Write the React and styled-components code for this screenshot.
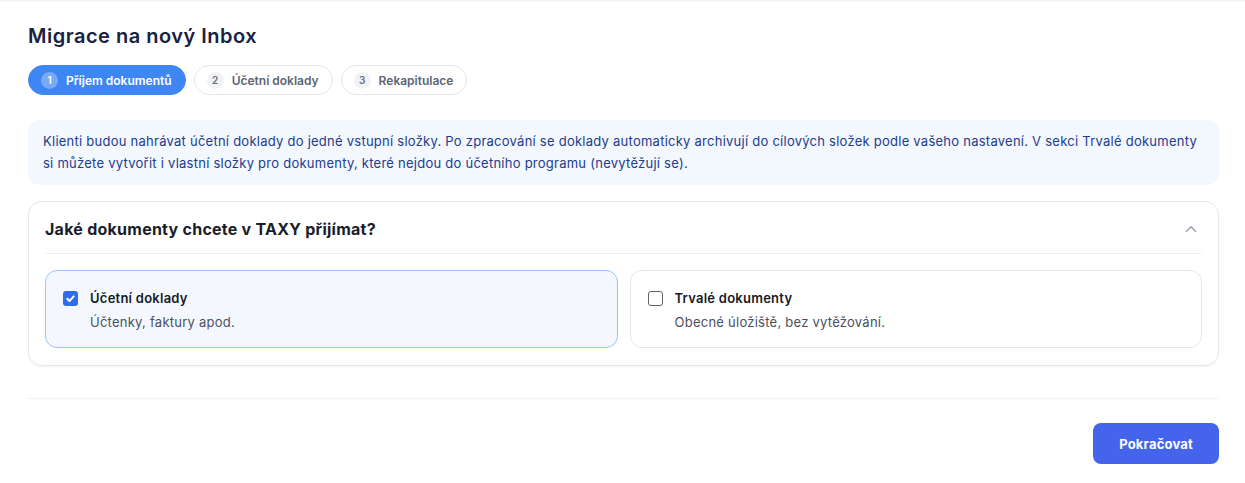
import React, { useState } from "react"
import styled, { createGlobalStyle } from "styled-components"

const GlobalStyle = createGlobalStyle`
  html, body {
    margin: 0;
    padding: 0;
    background: #ffffff;
    font-family: Inter, "Noto Sans", sans-serif;
    -webkit-font-smoothing: antialiased;
  }
  * { box-sizing: border-box; }
`

const Page = styled.div`
  border-top: 2px solid #f6f6f7;
  padding: 20px 26px 0 28px;
`

const Title = styled.h1`
  margin: 0;
  font-size: 20px;
  line-height: 28px;
  font-weight: 600;
  color: #18223f;
  letter-spacing: 0.5px;
`

const Steps = styled.div`
  display: flex;
  gap: 8px;
  margin-top: 15px;
`

const Step = styled.div`
  display: flex;
  align-items: center;
  gap: 8px;
  height: 30px;
  padding: 0 13px 0 12px;
  border-radius: 15px;
  font-size: 12px;
  font-weight: 600;
  border: 1px solid ${(p) => (p.active ? "#3f86f5" : "#e4e6ec")};
  background: ${(p) => (p.active ? "#3f86f5" : "#ffffff")};
  color: ${(p) => (p.active ? "#ffffff" : "#5d6475")};
`

const StepNum = styled.span`
  width: 17px;
  height: 17px;
  border-radius: 50%;
  display: flex;
  align-items: center;
  justify-content: center;
  font-size: 10px;
  font-weight: 600;
  background: ${(p) => (p.active ? "rgba(255,255,255,0.3)" : "#f1f2f5")};
  color: ${(p) => (p.active ? "#ffffff" : "#6b7180")};
`

const Info = styled.div`
  margin-top: 25px;
  background: #f3f7fe;
  border-radius: 12px;
  padding: 11px 15px 11px 15px;
  font-size: 13px;
  line-height: 21.5px;
  letter-spacing: 0.25px;
  color: #223c8c;
`

const Card = styled.div`
  margin-top: 16px;
  border: 1px solid #e5e7eb;
  border-radius: 14px;
  box-shadow: 0 1px 2px rgba(16, 24, 40, 0.05);
  padding: 0 16px 17px 16px;
`

const CardHeader = styled.div`
  display: flex;
  align-items: center;
  justify-content: space-between;
  height: 52px;
  padding-top: 3px;
  padding-right: 2px;
  border-bottom: 1px solid #eef0f3;
`

const CardTitle = styled.h2`
  margin: 0;
  font-size: 16px;
  font-weight: 700;
  letter-spacing: 0.25px;
  color: #1a1d29;
`

const Options = styled.div`
  display: grid;
  grid-template-columns: 1fr 1fr;
  gap: 12px;
  margin-top: 16px;
`

const Option = styled.label`
  display: flex;
  gap: 12px;
  padding: 17px 17px 15px 17px;
  border-radius: 12px;
  border: 1px solid ${(p) => (p.checked ? "#9cc3f8" : "#e5e7eb")};
  background: ${(p) => (p.checked ? "#f4f8fe" : "#ffffff")};
  cursor: pointer;
`

const Box = styled.span`
  flex: none;
  width: 15px;
  height: 15px;
  margin-top: 3px;
  border-radius: 3px;
  display: flex;
  align-items: center;
  justify-content: center;
  background: ${(p) => (p.checked ? "#2f6cf0" : "#ffffff")};
  border: ${(p) => (p.checked ? "none" : "1px solid #5f6470")};
`

const OptionTitle = styled.div`
  font-size: 13px;
  font-weight: 600;
  letter-spacing: 0.25px;
  color: #161a24;
  line-height: 20px;
`

const OptionDesc = styled.div`
  margin-top: 4px;
  font-size: 13px;
  letter-spacing: 0.25px;
  color: #4a5060;
  line-height: 20px;
`

const Divider = styled.hr`
  margin: 32px 0 0 0;
  border: none;
  border-top: 1px solid #f0f1f3;
`

const Footer = styled.div`
  display: flex;
  justify-content: flex-end;
  padding-top: 24px;
`

const Button = styled.button`
  height: 41px;
  padding: 0 26px;
  border: none;
  border-radius: 8px;
  background: #4464ec;
  color: #ffffff;
  font-family: inherit;
  font-size: 13px;
  font-weight: 700;
  letter-spacing: 0.2px;
  cursor: pointer;
`

const steps = ["Příjem dokumentů", "Účetní doklady", "Rekapitulace"]

const options = [
  { id: "ucetni", title: "Účetní doklady", desc: "Účtenky, faktury apod." },
  { id: "trvale", title: "Trvalé dokumenty", desc: "Obecné úložiště, bez vytěžování." },
]

export default function App() {
  const [selected, setSelected] = useState({ ucetni: true, trvale: false })

  return (
    <Page>
      <GlobalStyle />
      <Title>Migrace na nový Inbox</Title>
      <Steps>
        {steps.map((s, i) => (
          <Step key={s} active={i === 0}>
            <StepNum active={i === 0}>{i + 1}</StepNum>
            {s}
          </Step>
        ))}
      </Steps>
      <Info>
        Klienti budou nahrávat účetní doklady do jedné vstupní složky. Po zpracování se doklady automaticky archivují do cílových složek podle vašeho nastavení. V sekci Trvalé dokumenty si můžete vytvořit i vlastní složky pro dokumenty, které nejdou do účetního programu (nevytěžují se).
      </Info>
      <Card>
        <CardHeader>
          <CardTitle>Jaké dokumenty chcete v TAXY přijímat?</CardTitle>
          <svg width="18" height="18" viewBox="0 0 24 24" fill="none" stroke="#9aa0ab" strokeWidth="2" strokeLinecap="round" strokeLinejoin="round">
            <path d="M6 15l6-6 6 6" />
          </svg>
        </CardHeader>
        <Options>
          {options.map((o) => (
            <Option
              key={o.id}
              checked={selected[o.id]}
              onClick={() => setSelected({ ...selected, [o.id]: !selected[o.id] })}
            >
              <Box checked={selected[o.id]}>
                {selected[o.id] && (
                  <svg width="11" height="11" viewBox="0 0 12 12" fill="none" stroke="#fff" strokeWidth="2.2" strokeLinecap="round" strokeLinejoin="round">
                    <path d="M2.5 6.3l2.4 2.4 4.6-5" />
                  </svg>
                )}
              </Box>
              <div>
                <OptionTitle>{o.title}</OptionTitle>
                <OptionDesc>{o.desc}</OptionDesc>
              </div>
            </Option>
          ))}
        </Options>
      </Card>
      <Divider />
      <Footer>
        <Button>Pokračovat</Button>
      </Footer>
    </Page>
  )
}
